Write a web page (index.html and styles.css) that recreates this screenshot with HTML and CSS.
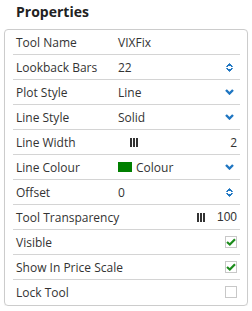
FILE: index.html
```html
<!DOCTYPE html>
<html lang="en">

<head>
    <meta charset="UTF-8">
    <title>Properties</title>
    <link rel="stylesheet" href="styles.css">
</head>

<body>
    <h1 class="title">Properties</h1>
    <div class="panel">
        <div class="row">
            <span class="label">Tool Name</span>
            <span class="value">VIXFix</span>
        </div>
        <div class="row">
            <span class="label">Lookback Bars</span>
            <span class="value">22</span>
            <svg class="spin" width="7" height="11" viewBox="0 0 7 11"><path d="M0.5 4.5 L3.5 1.5 L6.5 4.5 Z M0.5 6.5 L3.5 9.5 L6.5 6.5 Z" fill="#1f76c2" stroke="#1f76c2" stroke-width="1" stroke-linejoin="round"/><path d="M2 4.5 L5 4.5 M2 6.5 L5 6.5" stroke="#ffffff" stroke-width="1"/></svg>
        </div>
        <div class="row">
            <span class="label">Plot Style</span>
            <span class="value">Line</span>
            <svg class="chev" width="9" height="6" viewBox="0 0 9 6"><path d="M1 1 L4.5 4.5 L8 1" fill="none" stroke="#1f76c2" stroke-width="2.4"/></svg>
        </div>
        <div class="row">
            <span class="label">Line Style</span>
            <span class="value">Solid</span>
            <svg class="chev" width="9" height="6" viewBox="0 0 9 6"><path d="M1 1 L4.5 4.5 L8 1" fill="none" stroke="#1f76c2" stroke-width="2.4"/></svg>
        </div>
        <div class="row">
            <span class="label">Line Width</span>
            <span class="value"><span class="bars"><i></i><i></i><i></i></span></span>
            <span class="num">2</span>
        </div>
        <div class="row">
            <span class="label">Line Colour</span>
            <span class="value"><span class="swatch"></span>Colour</span>
            <svg class="chev" width="9" height="6" viewBox="0 0 9 6"><path d="M1 1 L4.5 4.5 L8 1" fill="none" stroke="#1f76c2" stroke-width="2.4"/></svg>
        </div>
        <div class="row">
            <span class="label">Offset</span>
            <span class="value">0</span>
            <svg class="spin" width="7" height="11" viewBox="0 0 7 11"><path d="M0.5 4.5 L3.5 1.5 L6.5 4.5 Z M0.5 6.5 L3.5 9.5 L6.5 6.5 Z" fill="#1f76c2" stroke="#1f76c2" stroke-width="1" stroke-linejoin="round"/><path d="M2 4.5 L5 4.5 M2 6.5 L5 6.5" stroke="#ffffff" stroke-width="1"/></svg>
        </div>
        <div class="row">
            <span class="label wide">Tool Transparency</span>
            <span class="bars"><i></i><i></i><i></i></span>
            <span class="num pct">100</span>
        </div>
        <div class="row">
            <span class="label">Visible</span>
            <span class="value"></span>
            <span class="check on"><svg width="10" height="8" viewBox="0 0 10 8"><path d="M1 4 L3.8 6.5 L9 1.2" fill="none" stroke="#1c8c1c" stroke-width="2.2"/></svg></span>
        </div>
        <div class="row">
            <span class="label wide">Show In Price Scale</span>
            <span class="value"></span>
            <span class="check on"><svg width="10" height="8" viewBox="0 0 10 8"><path d="M1 4 L3.8 6.5 L9 1.2" fill="none" stroke="#1c8c1c" stroke-width="2.2"/></svg></span>
        </div>
        <div class="row">
            <span class="label">Lock Tool</span>
            <span class="value"></span>
            <span class="check"></span>
        </div>
    </div>
</body>

</html>
```

FILE: styles.css
```css
body {
    margin: 0;
    font-family: 'Open Sans', 'Noto Sans', sans-serif;
    color: #333333;
    background-color: #ffffff;
}

.title {
    margin: 0;
    padding: 2px 0 0 16px;
    height: 27px;
    font-size: 14px;
    font-weight: bold;
    color: #222222;
}

.panel {
    margin-left: 4px;
    width: 242px;
    border: 1px solid #cccccc;
    border-radius: 4px;
    padding-bottom: 1px;
    box-shadow: 0 1px 1px rgba(0, 0, 0, 0.06);
}

.row {
    display: flex;
    align-items: center;
    height: 24px;
    margin: 0 7px 0 8px;
    padding: 0 3px;
    border-bottom: 1px solid #d4d4d4;
    font-size: 12px;
}

.row:last-child {
    border-bottom: none;
}

.label {
    width: 102px;
    flex-shrink: 0;
    white-space: nowrap;
}

.label.wide {
    width: auto;
}

.value {
    flex: 1;
    display: flex;
    align-items: center;
    white-space: nowrap;
}

.spin {
    margin-right: 4px;
}

.chev {
    margin-right: 3px;
}

.bars {
    display: inline-flex;
    gap: 1px;
    margin-left: 12px;
}

.row .label.wide + .bars {
    margin-left: auto;
}

.bars i {
    display: block;
    width: 2px;
    height: 9px;
    background-color: #333333;
}

.num {
    margin-left: 12px;
}

.pct {
    font-family: 'Liberation Sans', Arial, sans-serif;
    margin-left: 12px;
}

.swatch {
    display: inline-block;
    width: 14px;
    height: 10px;
    background-color: #007f00;
    margin-right: 4px;
}

.check {
    width: 10px;
    height: 10px;
    border: 1px solid #c8c8c8;
    display: flex;
    align-items: center;
    justify-content: center;
}
```
